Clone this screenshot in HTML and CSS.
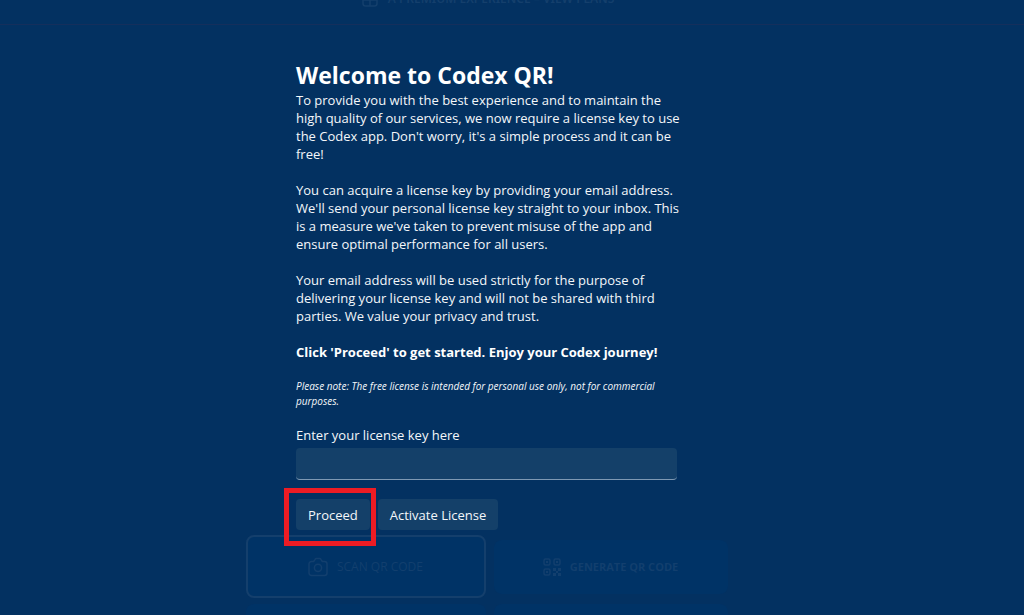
FILE: index.html
```html
<!DOCTYPE html>
<html lang="en">
<head>
<meta charset="utf-8">
<meta name="viewport" content="width=device-width, initial-scale=1">
<title>Codex QR</title>
<link rel="stylesheet" href="styles.css">
</head>
<body>
<header class="promo">
  <svg class="promo-icon" viewBox="0 0 16 16" aria-hidden="true"><rect x="1" y="1" width="14" height="14" rx="2.5"/><path d="M8 1v14M1 9h14"/></svg>
  <span>A PREMIUM EXPERIENCE – VIEW PLANS</span>
</header>
<main class="page">
  <form class="license">
    <h1>Welcome to Codex QR!</h1>
    <p>To provide you with the best experience and to maintain the<br>high quality of our services, we now require a license key to use<br>the Codex app. Don't worry, it's a simple process and it can be<br>free!</p>
    <p>You can acquire a license key by providing your email address.<br>We'll send your personal license key straight to your inbox. This<br>is a measure we've taken to prevent misuse of the app and<br>ensure optimal performance for all users.</p>
    <p>Your email address will be used strictly for the purpose of<br>delivering your license key and will not be shared with third<br>parties. We value your privacy and trust.</p>
    <p class="strong">Click 'Proceed' to get started. Enjoy your Codex journey!</p>
    <p class="note">Please note: The free license is intended for personal use only, not for commercial<br>purposes.</p>
    <label for="key">Enter your license key here</label>
    <input id="key" class="key" type="text">
    <div class="actions">
      <button type="button" class="btn marked">Proceed</button>
      <button type="button" class="btn">Activate License</button>
    </div>
  </form>
  <div class="cards">
    <button type="button" class="card outlined" disabled>
      <svg class="camera" viewBox="0 0 20 20" aria-hidden="true"><path d="M3.5 4.5h2.2l1.4-2.2a1.5 1.5 0 0 1 1.2-.8h3.4a1.5 1.5 0 0 1 1.2.8l1.4 2.2h2.2A2.5 2.5 0 0 1 19 7v9a2.5 2.5 0 0 1-2.5 2.5h-13A2.5 2.5 0 0 1 1 16V7a2.5 2.5 0 0 1 2.5-2.5z"/><circle cx="10" cy="10.8" r="3.6"/></svg>
      <span>SCAN QR CODE</span>
    </button>
    <button type="button" class="card filled" disabled>
      <svg class="qr" viewBox="0 0 18 18" aria-hidden="true"><g class="ring"><rect x="1" y="1" width="6" height="6" rx="1.5"/><rect x="11" y="1" width="6" height="6" rx="1.5"/><rect x="1" y="11" width="6" height="6" rx="1.5"/></g><path d="M3 3h2v2H3zM13 3h2v2h-2zM3 13h2v2H3zM10 10h3v3h-3zM15 10h3v3h-3zM13 13h2v2h-2zM10 15h3v3h-3zM15 15h3v3h-3z"/></svg>
      <span>GENERATE QR CODE</span>
    </button>
    <div class="card next"></div>
    <div class="card next"></div>
  </div>
</main>
</body>
</html>
```
FILE: styles.css
```css
* {
  box-sizing: border-box;
}

body {
  margin: 0;
  height: 100vh;
  overflow: hidden;
  background: #033161;
  color: #f4f7fa;
  font: 13px/18px "Open Sans", "Noto Sans", sans-serif;
}

.promo {
  display: flex;
  align-items: center;
  justify-content: center;
  gap: 10px;
  height: 52px;
  margin-top: -27px;
  padding-right: 48px;
  border-bottom: 1px solid #142f5c;
  color: #143f6c;
  font-family: "Noto Sans", "Open Sans", sans-serif;
  font-size: 12px;
  font-weight: 600;
}

.promo-icon {
  width: 16px;
  height: 16px;
  fill: none;
  stroke: currentColor;
  stroke-width: 1.5;
}

.page {
  display: flex;
  flex-direction: column;
  align-items: center;
  padding: 35px 51px 0 0;
}

.license {
  width: 100%;
  max-width: 381px;
}

h1 {
  margin: 0 0 1px;
  color: #ffffff;
  font-size: 23px;
  line-height: 30px;
  font-weight: 700;
}

p {
  margin: 0 0 18px;
  white-space: nowrap;
}

.strong {
  color: #ffffff;
  font-weight: 700;
}

.note {
  margin-bottom: 17px;
  font-size: 10px;
  line-height: 15px;
  font-style: italic;
}

label {
  display: block;
  margin-bottom: 4px;
}

.key {
  display: block;
  width: 100%;
  height: 32px;
  padding: 0 10px;
  border: 0;
  border-bottom: 1px solid #7f99b3;
  border-radius: 4px;
  background: #144069;
  color: inherit;
  font: inherit;
}

.actions {
  display: flex;
  gap: 8px;
  margin-top: 19px;
}

.btn {
  height: 31px;
  padding: 0 12px;
  border: 0;
  border-radius: 4px;
  background: #144069;
  color: inherit;
  font: inherit;
}

.marked {
  position: relative;
}

.marked::after {
  content: "";
  position: absolute;
  inset: -11px -6px -16px -12px;
  border: 5px solid #ed1c24;
}

.cards {
  display: grid;
  grid-template-columns: 239fr 233fr;
  column-gap: 8px;
  row-gap: 6px;
  align-items: center;
  width: 100%;
  max-width: 482px;
  margin-top: 5px;
}

.card {
  display: flex;
  align-items: center;
  justify-content: center;
  gap: 9px;
  height: 54px;
  border: 0;
  border-radius: 8px;
  background: #003366;
  color: #123f6e;
  font: 700 11px/18px "Open Sans", "Noto Sans", sans-serif;
}

.outlined {
  height: 63px;
  border: 2px solid #143f6c;
  font-size: 12px;
  font-weight: 400;
}

.camera {
  width: 20px;
  height: 20px;
  fill: none;
  stroke: currentColor;
  stroke-width: 1.5;
}

.qr {
  width: 18px;
  height: 18px;
  fill: currentColor;
}

.ring {
  fill: none;
  stroke: currentColor;
  stroke-width: 1.5;
}
```
